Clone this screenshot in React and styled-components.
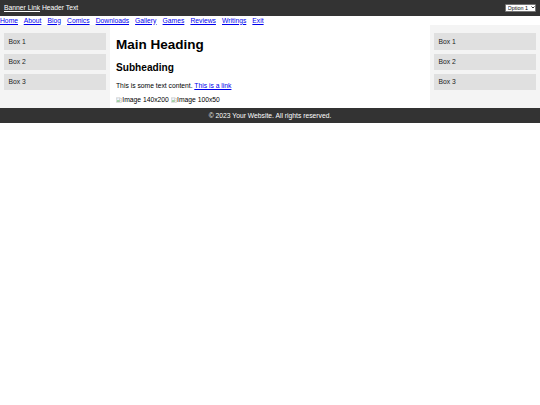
import React from "react";
import styled, { createGlobalStyle } from "styled-components";

const GlobalStyle = createGlobalStyle`
  body {
    margin: 0;
    background: #fff;
    font-family: "Liberation Sans", Arial, sans-serif;
    font-size: 6.75px;
    line-height: 7.76px;
    color: #000;
  }
`;

const Header = styled.header`
  height: 15.5px;
  background: #333;
  color: #fff;
  display: flex;
  align-items: center;
  justify-content: space-between;
  padding: 0 4px;
  box-sizing: border-box;
`;

const Banner = styled.div`
  a {
    color: #fff;
  }
`;

const SelectWrap = styled.div`
  position: relative;
  width: 31px;
  height: 8px;
`;

const Select = styled.select`
  appearance: none;
  font-family: "Liberation Sans", Arial, sans-serif;
  font-size: 5.4px;
  line-height: 7px;
  width: 100%;
  height: 100%;
  margin: 0;
  padding: 0 0 0 1.5px;
  border: 0.5px solid #767676;
  border-radius: 1px;
  background: #fff;
  color: #000;
  box-sizing: border-box;
  outline: none;
`;

const Chevron = styled.svg`
  position: absolute;
  right: 1.5px;
  top: 2.5px;
  width: 4px;
  height: 3px;
  pointer-events: none;
`;

const Nav = styled.nav`
  height: 9.5px;
  line-height: 9px;
  a {
    color: #0000ee;
    margin-right: 4.2px;
  }
`;

const Container = styled.div`
  display: flex;
`;

const Sidebar = styled.aside`
  width: 110px;
  flex-shrink: 0;
  background: #f4f4f4;
  padding: 4.2px;
  box-sizing: border-box;
`;

const Box = styled.div`
  background: #e0e0e0;
  color: #222;
  padding: 4.2px;
  margin: 4.2px 0;
`;

const Main = styled.main`
  flex: 1;
  padding: 3px 6px 4.5px;

  h1 {
    font-size: 13.5px;
    line-height: 15.5px;
    margin: 9.05px 0;
  }
  h2 {
    font-size: 10.125px;
    line-height: 11.64px;
    margin: 8.4px 0;
  }
  p {
    margin: 6.75px 0;
  }
  a {
    color: #0000ee;
  }
`;

const Images = styled.div`
  display: flex;
  gap: 1.9px;
`;

const Broken = styled.span`
  display: inline-flex;
  align-items: center;
  color: #000;
  svg {
    width: 6px;
    height: 6px;
    margin-right: 0.3px;
  }
`;

const Footer = styled.footer`
  background: #333;
  color: #fff;
  text-align: center;
  padding: 3.6px;
`;

function BrokenImage({ alt }) {
  return (
    <Broken>
      <svg viewBox="0 0 16 16">
        <path d="M1 2h10l-2 3 2 3-2 3 1 3H1z" fill="#fff" stroke="#999" strokeWidth="1" />
        <path d="M2 12l3-4 2 2 2-2v4z" fill="#4caf50" />
        <circle cx="5" cy="5" r="1.3" fill="#5aa0e6" />
        <path d="M12 4h3v10h-4l-1-2 2-3-2-3z" fill="#fff" stroke="#999" strokeWidth="1" />
      </svg>
      {alt}
    </Broken>
  );
}

const boxes = ["Box 1", "Box 2", "Box 3"];
const links = ["Home", "About", "Blog", "Comics", "Downloads", "Gallery", "Games", "Reviews", "Writings", "Exit"];

export default function App() {
  return (
    <>
      <GlobalStyle />
      <Header>
        <Banner>
          <a href="#">Banner Link</a> Header Text
        </Banner>
        <SelectWrap>
          <Select defaultValue="1">
            <option value="1">Option 1</option>
            <option value="2">Option 2</option>
          </Select>
          <Chevron viewBox="0 0 8 6">
            <path d="M1 1l3 3 3-3" fill="none" stroke="#000" strokeWidth="1.6" />
          </Chevron>
        </SelectWrap>
      </Header>
      <Nav>
        {links.map((l) => (
          <React.Fragment key={l}>
            <a href="#">{l}</a>{" "}
          </React.Fragment>
        ))}
      </Nav>
      <Container>
        <Sidebar>
          {boxes.map((b) => (
            <Box key={b}>{b}</Box>
          ))}
        </Sidebar>
        <Main>
          <h1>Main Heading</h1>
          <h2>Subheading</h2>
          <p>
            This is some text content. <a href="#">This is a link</a>
          </p>
          <Images>
            <BrokenImage alt="Image 140x200" />
            <BrokenImage alt="Image 100x50" />
          </Images>
        </Main>
        <Sidebar>
          {boxes.map((b) => (
            <Box key={b}>{b}</Box>
          ))}
        </Sidebar>
      </Container>
      <Footer>© 2023 Your Website. All rights reserved.</Footer>
    </>
  );
}
